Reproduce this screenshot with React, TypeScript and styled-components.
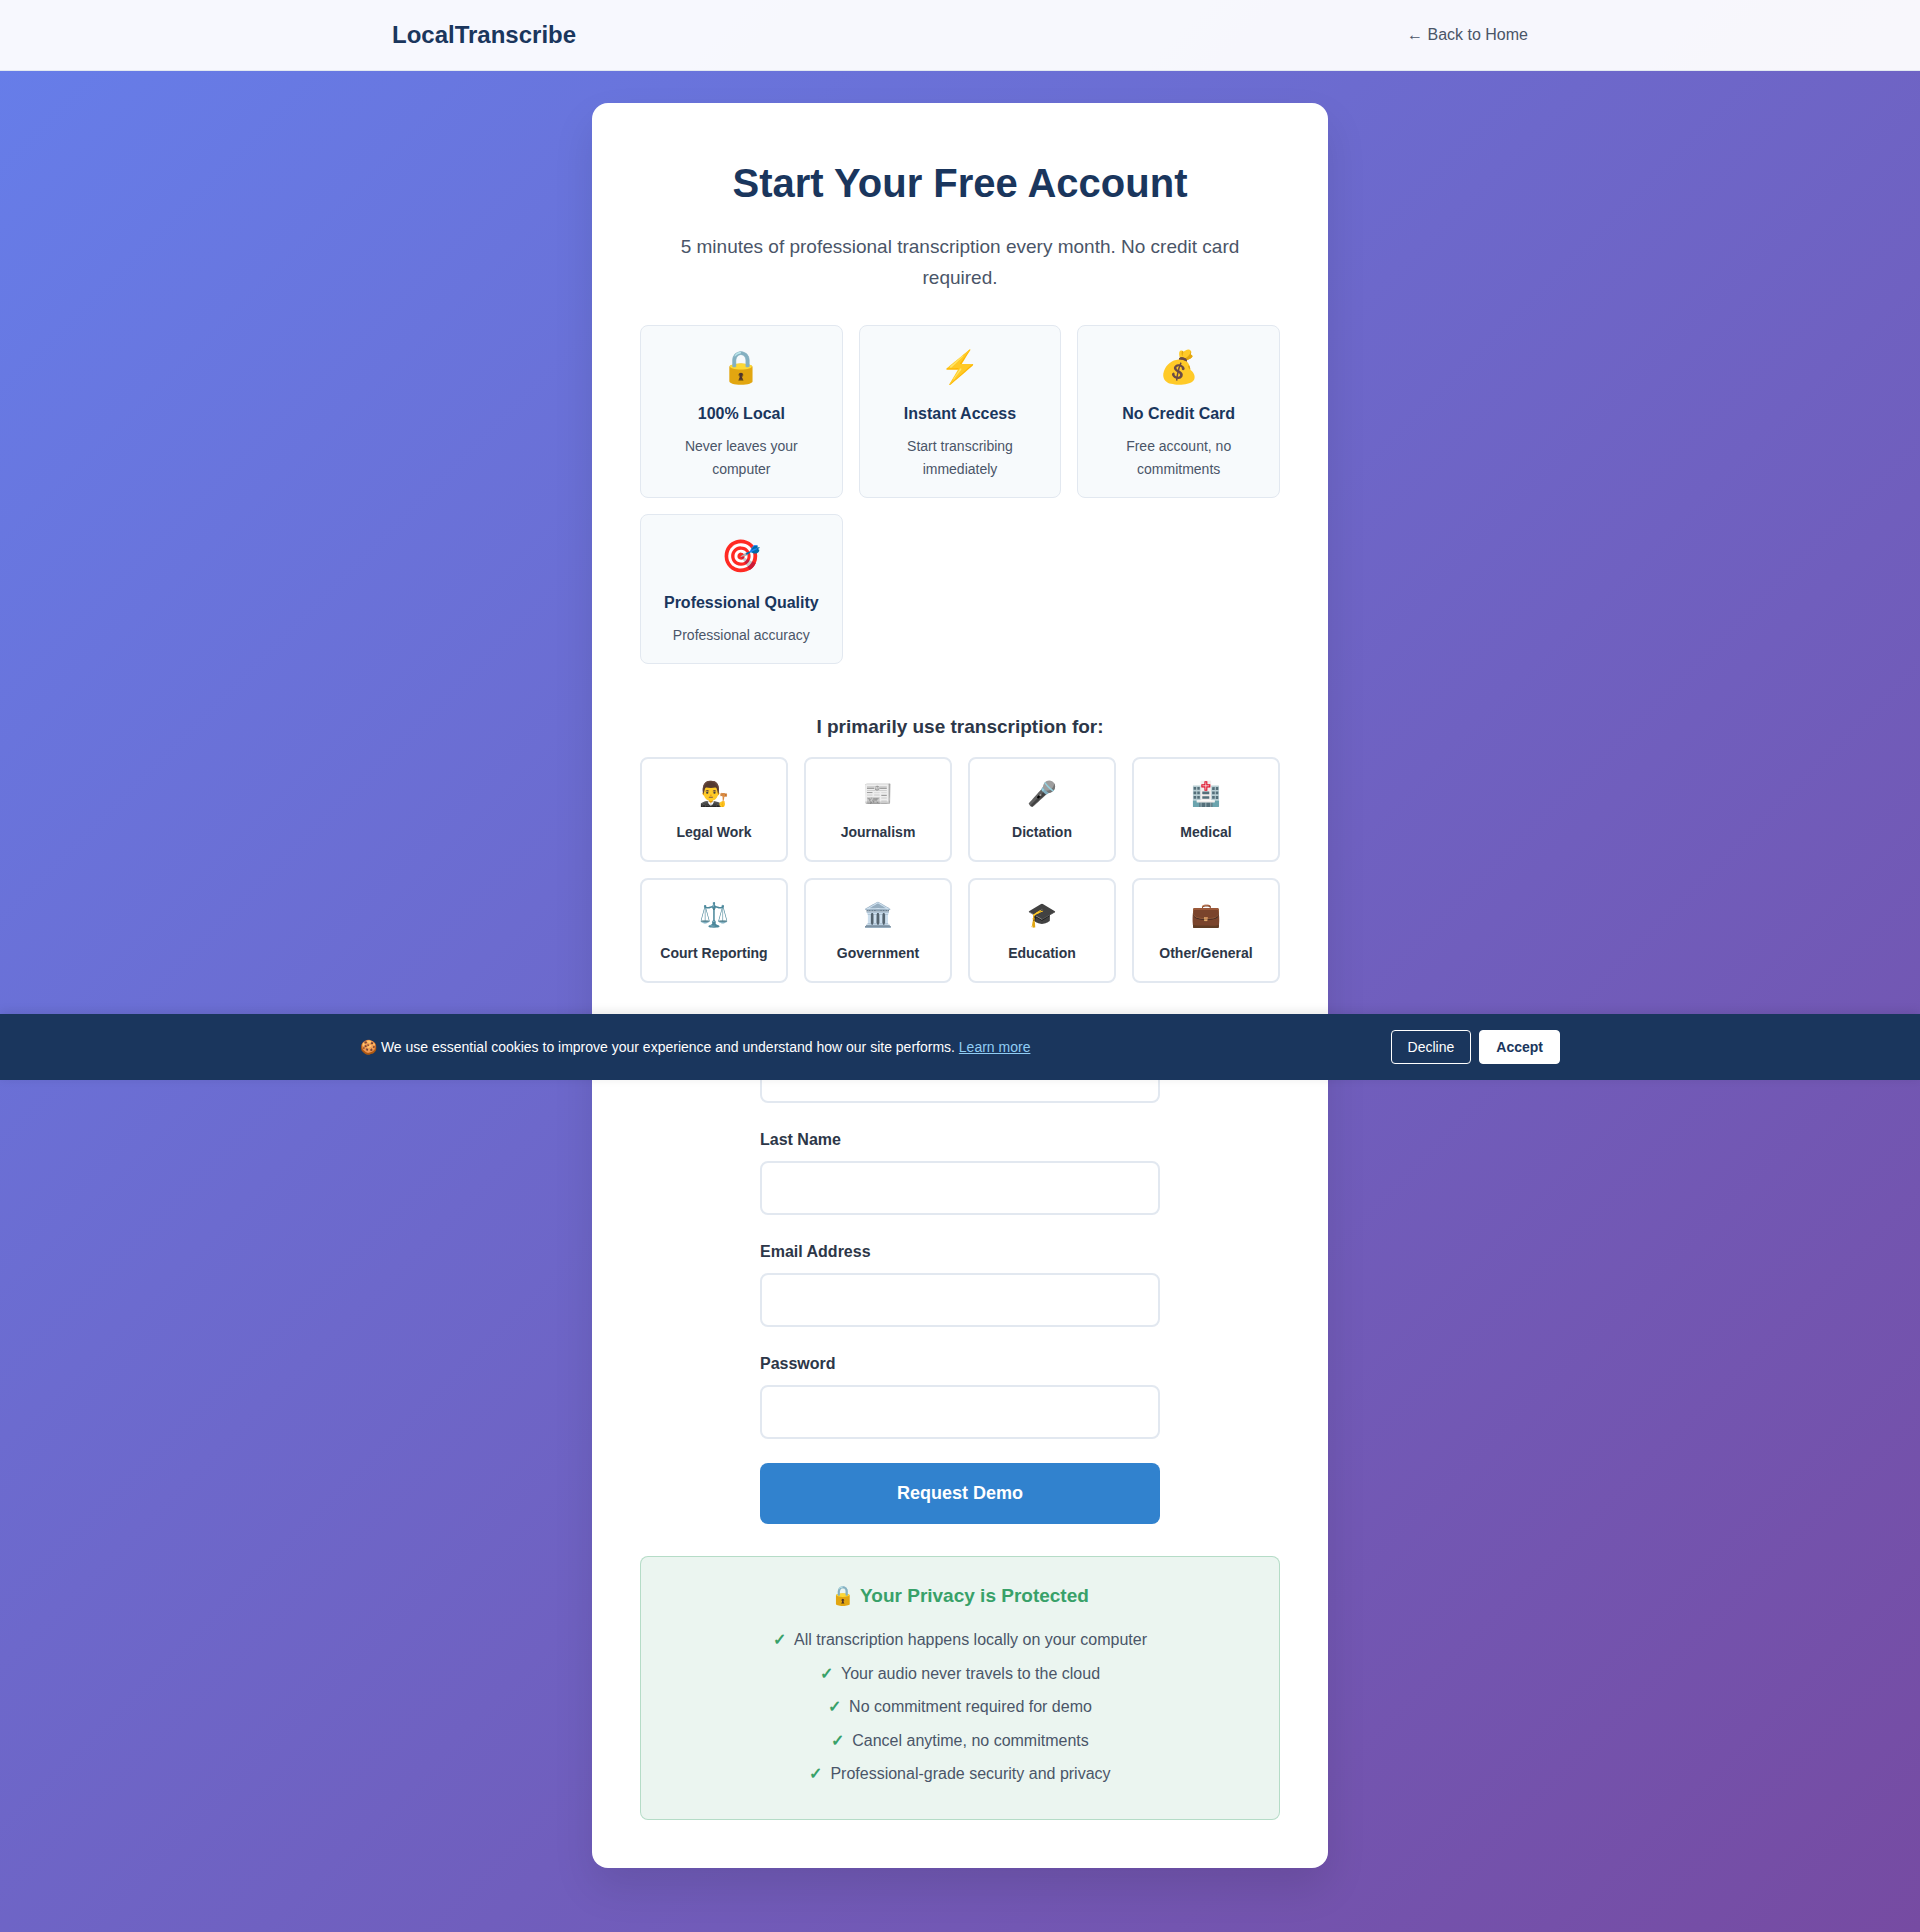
import React from "react";
import styled, { createGlobalStyle, css } from "styled-components";

const GlobalStyle = createGlobalStyle`
  *, *::before, *::after { box-sizing: border-box; }
  html { min-height: 100%; }
  body {
    margin: 0;
    min-height: 100vh;
    position: relative;
    background: linear-gradient(135deg, #667eea 0%, #764ba2 100%);
    color: #2d3748;
    font-family: "Liberation Sans", Arial, sans-serif;
    font-size: 16px;
    line-height: 26px;
  }
  h1, h2, h3, p, ul { margin: 0; padding: 0; }
  button, input { font-family: inherit; }
`;

const Header = styled.header`
  background: rgba(255, 255, 255, 0.95);
  border-bottom: 1px solid #e2e8f0;
  padding: 16px 0;
`;

const HeaderInner = styled.div`
  display: flex;
  align-items: center;
  justify-content: space-between;
  max-width: 1200px;
  margin: 0 auto;
  padding: 0 32px;
`;

const Logo = styled.div`
  font-size: 24px;
  line-height: 38px;
  font-weight: 700;
  color: #1a365d;
`;

const BackLink = styled.a`
  color: #4a5568;
  text-decoration: none;
`;

const Main = styled.main`
  max-width: 800px;
  margin: 0 auto;
  padding: 32px 32px 64px;
`;

const Card = styled.section`
  background: #ffffff;
  border-radius: 16px;
  padding: 48px;
  box-shadow: 0 20px 40px rgba(0, 0, 0, 0.1);
  text-align: center;
`;

const Title = styled.h1`
  font-size: 40px;
  line-height: 64px;
  color: #1a365d;
  margin-bottom: 16px;
`;

const Subtitle = styled.p`
  max-width: 600px;
  font-size: 19px;
  line-height: 31px;
  color: #4a5568;
  margin: 0 auto 32px;
`;

const Benefits = styled.div`
  display: grid;
  grid-template-columns: repeat(auto-fit, minmax(180px, 1fr));
  align-items: start;
  gap: 16px;
  margin-bottom: 48px;
`;

const Benefit = styled.div`
  background: #f7fafc;
  border: 1px solid #e2e8f0;
  border-radius: 8px;
  padding: 16px;
`;

const BenefitIcon = styled.div`
  font-size: 32px;
  line-height: 51px;
  margin-bottom: 8px;
`;

const BenefitTitle = styled.h3`
  font-size: 16px;
  line-height: 26px;
  color: #1a365d;
  margin-bottom: 8px;
  white-space: nowrap;
`;

const BenefitText = styled.p`
  font-size: 14px;
  line-height: 23px;
  color: #4a5568;
`;

const UseHeading = styled.h3`
  font-size: 19px;
  line-height: 29px;
  margin-bottom: 16px;
`;

const Uses = styled.div`
  display: grid;
  grid-template-columns: repeat(auto-fit, minmax(140px, 1fr));
  gap: 16px;
  margin-bottom: 32px;
`;

const Use = styled.button`
  display: flex;
  flex-direction: column;
  align-items: center;
  gap: 8px;
  padding: 16px 8px;
  background: #ffffff;
  border: 2px solid #e2e8f0;
  border-radius: 8px;
  cursor: pointer;
`;

const UseIcon = styled.span`
  font-size: 24px;
  line-height: 38px;
`;

const UseLabel = styled.span`
  font-size: 14px;
  line-height: 23px;
  font-weight: 600;
  color: #2d3748;
`;

const Form = styled.form`
  max-width: 400px;
  margin: 0 auto;
`;

const Field = styled.div`
  display: flex;
  flex-direction: column;
  gap: 8px;
  margin-bottom: 24px;
  text-align: left;
`;

const Label = styled.label`
  font-weight: 600;
`;

const Input = styled.input`
  width: 100%;
  padding: 16px;
  border: 2px solid #e2e8f0;
  border-radius: 8px;
  background: #ffffff;
  font-size: 16px;
  line-height: 18px;
`;

const Submit = styled.button`
  width: 100%;
  padding: 20px 32px;
  border: 0;
  border-radius: 8px;
  background: #3182ce;
  color: #ffffff;
  font-size: 18px;
  line-height: 21px;
  font-weight: 600;
  cursor: pointer;
`;

const Privacy = styled.section`
  margin-top: 32px;
  padding: 24px;
  background: rgba(56, 161, 105, 0.1);
  border: 1px solid rgba(56, 161, 105, 0.3);
  border-radius: 8px;
`;

const PrivacyTitle = styled.h3`
  font-size: 19px;
  line-height: 30px;
  color: #38a169;
  margin-bottom: 16px;
`;

const PrivacyList = styled.ul`
  display: grid;
  grid-auto-rows: 1fr;
  min-height: 168px;
  list-style: none;
  color: #4a5568;
`;

const Check = styled.span`
  margin-right: 8px;
  font-weight: 700;
  color: #38a169;
`;

const CookieBanner = styled.aside`
  position: absolute;
  top: 1014px;
  left: 0;
  right: 0;
  padding: 16px;
  background: #1a365d;
  color: #ffffff;
  box-shadow: 0 -2px 10px rgba(0, 0, 0, 0.1);
`;

const CookieInner = styled.div`
  display: flex;
  align-items: center;
  justify-content: space-between;
  gap: 16px;
  max-width: 1200px;
  margin: 0 auto;
`;

const CookieText = styled.p`
  font-size: 14px;
  line-height: 23px;
`;

const CookieLink = styled.a`
  color: #90cdf4;
`;

const CookieActions = styled.div`
  display: flex;
  gap: 8px;
`;

const CookieButton = styled.button<{ $primary?: boolean }>`
  padding: 8px 16px;
  border: 1px solid #ffffff;
  border-radius: 4px;
  background: transparent;
  color: #ffffff;
  font-size: 14px;
  line-height: 16px;
  cursor: pointer;
  ${(p) =>
    p.$primary &&
    css`
      background: #ffffff;
      color: #1a365d;
      font-weight: 600;
    `}
`;

const benefits = [
  { icon: "🔒", title: "100% Local", text: "Never leaves your computer" },
  { icon: "⚡", title: "Instant Access", text: "Start transcribing immediately" },
  { icon: "💰", title: "No Credit Card", text: "Free account, no commitments" },
  { icon: "🎯", title: "Professional Quality", text: "Professional accuracy" },
];

const uses = [
  { icon: "👨‍⚖️", label: "Legal Work" },
  { icon: "📰", label: "Journalism" },
  { icon: "🎤", label: "Dictation" },
  { icon: "🏥", label: "Medical" },
  { icon: "⚖️", label: "Court Reporting" },
  { icon: "🏛️", label: "Government" },
  { icon: "🎓", label: "Education" },
  { icon: "💼", label: "Other/General" },
];

const fields = [
  { id: "firstName", label: "First Name", type: "text" },
  { id: "lastName", label: "Last Name", type: "text" },
  { id: "email", label: "Email Address", type: "email" },
  { id: "password", label: "Password", type: "password" },
];

const promises = [
  "All transcription happens locally on your computer",
  "Your audio never travels to the cloud",
  "No commitment required for demo",
  "Cancel anytime, no commitments",
  "Professional-grade security and privacy",
];

export default function App() {
  return (
    <>
      <GlobalStyle />
      <Header>
        <HeaderInner>
          <Logo>LocalTranscribe</Logo>
          <BackLink href="#home">← Back to Home</BackLink>
        </HeaderInner>
      </Header>
      <Main>
        <Card>
          <Title>Start Your Free Account</Title>
          <Subtitle>
            5 minutes of professional transcription every month. No credit card required.
          </Subtitle>
          <Benefits>
            {benefits.map((b) => (
              <Benefit key={b.title}>
                <BenefitIcon>{b.icon}</BenefitIcon>
                <BenefitTitle>{b.title}</BenefitTitle>
                <BenefitText>{b.text}</BenefitText>
              </Benefit>
            ))}
          </Benefits>
          <UseHeading>I primarily use transcription for:</UseHeading>
          <Uses>
            {uses.map((u) => (
              <Use key={u.label} type="button">
                <UseIcon>{u.icon}</UseIcon>
                <UseLabel>{u.label}</UseLabel>
              </Use>
            ))}
          </Uses>
          <Form onSubmit={(e) => e.preventDefault()}>
            {fields.map((f) => (
              <Field key={f.id}>
                <Label htmlFor={f.id}>{f.label}</Label>
                <Input id={f.id} name={f.id} type={f.type} />
              </Field>
            ))}
            <Submit type="submit">Request Demo</Submit>
          </Form>
          <Privacy>
            <PrivacyTitle>🔒 Your Privacy is Protected</PrivacyTitle>
            <PrivacyList>
              {promises.map((text) => (
                <li key={text}>
                  <Check>✓</Check>
                  {text}
                </li>
              ))}
            </PrivacyList>
          </Privacy>
        </Card>
      </Main>
      <CookieBanner aria-label="Cookie notice">
        <CookieInner>
          <CookieText>
            🍪 We use essential cookies to improve your experience and understand how our site
            performs. <CookieLink href="#privacy">Learn more</CookieLink>
          </CookieText>
          <CookieActions>
            <CookieButton type="button">Decline</CookieButton>
            <CookieButton type="button" $primary>
              Accept
            </CookieButton>
          </CookieActions>
        </CookieInner>
      </CookieBanner>
    </>
  );
}
